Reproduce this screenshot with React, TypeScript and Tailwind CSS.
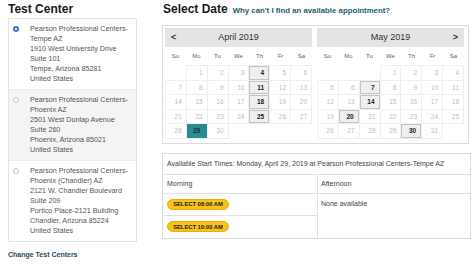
import React from "react";

type Center = { lines: string[]; selected?: boolean; shaded?: boolean };

const centers: Center[] = [
  {
    selected: true,
    lines: [
      "Pearson Professional Centers-",
      "Tempe AZ",
      "1910 West University Drive",
      "Suite 101",
      "Tempe, Arizona 85281",
      "United States",
    ],
  },
  {
    shaded: true,
    lines: [
      "Pearson Professional Centers-",
      "Phoenix AZ",
      "2501 West Dunlap Avenue",
      "Suite 260",
      "Phoenix, Arizona 85021",
      "United States",
    ],
  },
  {
    lines: [
      "Pearson Professional Centers-",
      "Phoenix (Chandler) AZ",
      "2121 W. Chandler Boulevard",
      "Suite 209",
      "Portico Place-2121 Building",
      "Chandler, Arizona 85224",
      "United States",
    ],
  },
];

const dayNames = ["Su", "Mo", "Tu", "We", "Th", "Fr", "Sa"];

function buildWeeks(offset: number, days: number) {
  const cells: (number | null)[] = [];
  for (let i = 0; i < offset; i++) cells.push(null);
  for (let d = 1; d <= days; d++) cells.push(d);
  while (cells.length % 7) cells.push(null);
  const weeks: (number | null)[][] = [];
  for (let i = 0; i < cells.length; i += 7) weeks.push(cells.slice(i, i + 7));
  return weeks;
}

function Month({
  title,
  offset,
  days,
  open,
  selected,
  prev,
  next,
}: {
  title: string;
  offset: number;
  days: number;
  open: number[];
  selected?: number;
  prev?: boolean;
  next?: boolean;
}) {
  const weeks = buildWeeks(offset, days);
  return (
    <div className="w-[147px]">
      {/* month header */}
      <div className="relative h-[19px] bg-[#e4e4e4] flex items-center justify-center text-[9px] text-[#333]">
        {prev && (
          <span className="absolute left-[6px] top-[3px] text-[9px] font-bold text-[#333]">&lt;</span>
        )}
        {title}
        {next && (
          <span className="absolute right-[6px] top-[3px] text-[9px] font-bold text-[#333]">&gt;</span>
        )}
      </div>
      <div className="grid grid-cols-7 h-[18px] items-center text-[6px] text-[#666]">
        {dayNames.map((d) => (
          <div key={d} className="text-center">
            {d}
          </div>
        ))}
      </div>
      <table className="w-full border-collapse table-fixed">
        <tbody>
          {weeks.map((w, i) => (
            <tr key={i}>
              {w.map((d, j) => {
                if (d === null) return <td key={j} className="h-[13.6px] p-0" />;
                const isOpen = open.includes(d);
                const isSel = d === selected;
                return (
                  <td key={j} className="h-[13.6px] p-0 border border-[#efefef]">
                    {isSel ? (
                      <div className="h-[13.6px] bg-[#2a8b90] text-[#1b2f33] font-bold text-[6.5px] flex items-center justify-center">
                        {d}
                      </div>
                    ) : isOpen ? (
                      <div className="h-[13.6px] bg-[#efefef] border border-[#c4c4c4] text-[#222] font-bold text-[6.5px] flex items-center justify-end pr-[4px]">
                        {d}
                      </div>
                    ) : (
                      <div className="h-[13.6px] text-[#c0c0c0] text-[6.5px] flex items-center justify-end pr-[4px]">
                        {d}
                      </div>
                    )}
                  </td>
                );
              })}
            </tr>
          ))}
        </tbody>
      </table>
    </div>
  );
}

function Radio({ checked }: { checked?: boolean }) {
  return checked ? (
    <span className="mt-[2px] w-[6px] h-[6px] shrink-0 rounded-full bg-[#2f7de1] flex items-center justify-center">
      <span className="w-[2px] h-[2px] rounded-full bg-white" />
    </span>
  ) : (
    <span className="mt-[2px] w-[6px] h-[6px] shrink-0 rounded-full border border-[#c4c4c4] bg-white" />
  );
}

export default function App() {
  return (
    <div className="w-[474px] h-[264px] bg-white flex overflow-hidden font-['Liberation_Sans',Arial,sans-serif] text-[#333]">
      {/* Test center column */}
      <div className="w-[162px] shrink-0 pl-2 pt-[2px]">
        <h1 className="text-[12px] leading-[15px] font-bold text-[#1a1a1a] mb-[1px]">Test Center</h1>
        <div className="w-[129px] border border-[#e4e4e4]">
          {centers.map((c, i) => (
            <div
              key={i}
              className={`flex gap-[11px] pl-[4px] py-[5px] ${c.shaded ? "bg-[#f4f4f4]" : "bg-white"} ${
                i > 0 ? "border-t border-[#ececec]" : ""
              }`}
            >
              <Radio checked={c.selected} />
              <div className="text-[7.2px] leading-[10px] text-[#555] whitespace-nowrap">
                {c.lines.map((l) => (
                  <div key={l}>{l}</div>
                ))}
              </div>
            </div>
          ))}
        </div>
        <div className="mt-[8px] text-[7px] leading-[10px] font-bold text-[#2b4a57]">Change Test Centers</div>
      </div>

      {/* Date column */}
      <div className="flex-1 pt-[2px]">
        <div className="flex items-baseline gap-[5px] pl-[1px]">
          <h1 className="text-[12px] leading-[15px] font-bold text-[#1a1a1a]">Select Date</h1>
          <span className="text-[7.8px] font-bold text-[#1f5d6d]">Why can't I find an available appointment?</span>
        </div>

        <div className="mt-[8px] w-[307px] border border-[#dcdcdc] p-[2px] pb-[4px] flex gap-[5px]">
          <Month title="April 2019" offset={1} days={30} open={[4, 11, 18, 25]} selected={29} prev />
          <Month title="May 2019" offset={3} days={31} open={[7, 14, 20, 30]} next />
        </div>

        <div className="mt-[9px] w-[309px] border border-[#dcdcdc] text-[7px] text-[#444]">
          <div className="h-[21px] flex items-center px-[4px] border-b border-[#e2e2e2] whitespace-nowrap">
            Available Start Times: Monday, April 29, 2019 at Pearson Professional Centers-Tempe AZ
          </div>
          <div className="grid grid-cols-[155px_1fr]">
            <div className="h-[19px] flex items-center px-[4px] border-b border-r border-[#e2e2e2]">Morning</div>
            <div className="h-[19px] flex items-center px-[3px] border-b border-[#e2e2e2]">Afternoon</div>
            <div className="h-[22px] flex items-center px-[4px] border-b border-r border-[#e2e2e2]">
              <button className="h-[11px] w-[62px] rounded-full bg-[#f6c31a] border border-[#e8b000] text-[5.8px] font-bold text-[#222] flex items-center justify-center">
                SELECT 08:00 AM
              </button>
            </div>
            <div className="row-span-2 px-[3px] pt-[6px] leading-[8px]">None available</div>
            <div className="h-[22px] flex items-center px-[4px] border-r border-[#e2e2e2]">
              <button className="h-[11px] w-[62px] rounded-full bg-[#f6c31a] border border-[#e8b000] text-[5.8px] font-bold text-[#222] flex items-center justify-center">
                SELECT 10:00 AM
              </button>
            </div>
          </div>
        </div>
      </div>
    </div>
  );
}
